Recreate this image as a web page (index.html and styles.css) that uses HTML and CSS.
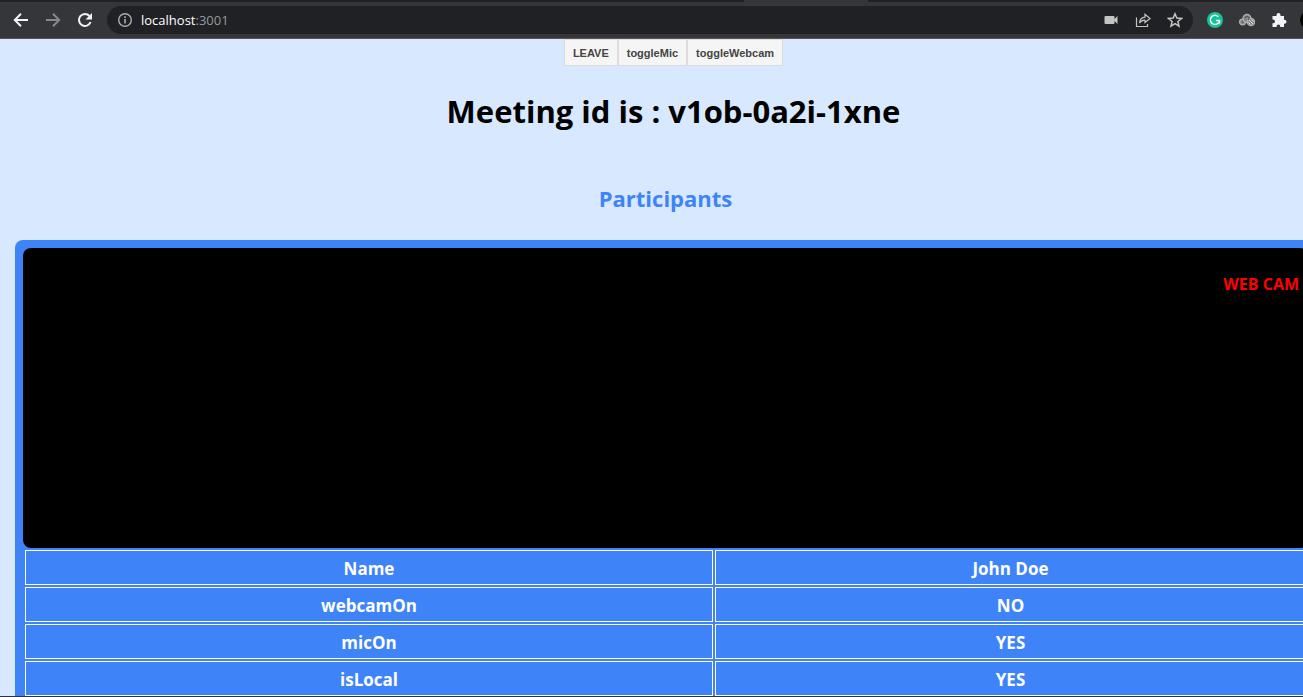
FILE: index.html
```html
<!DOCTYPE html>
<html lang="en">
<head>
<meta charset="utf-8">
<title>Meeting</title>
<link rel="stylesheet" href="styles.css">
</head>
<body>
<header class="browser">
  <div class="tabstrip"><span class="tab"></span></div>
  <div class="toolbar">
    <nav class="nav" aria-label="Navigation">
      <button class="icon" aria-label="Back"><svg viewBox="0 0 16 16"><path d="M15 8H2M8 1.800 1.800 8 8 14.200" fill="none" stroke="#f1f3f4" stroke-width="2"/></svg></button>
      <button class="icon" aria-label="Forward"><svg viewBox="0 0 16 16"><path d="M1 8h13M8 1.800 14.200 8 8 14.200" fill="none" stroke="#86888b" stroke-width="2"/></svg></button>
      <button class="icon" aria-label="Reload"><svg viewBox="0 0 16 16"><path d="M13.600 10A6 6 0 1 1 12.500 4" fill="none" stroke="#f1f3f4" stroke-width="2"/><path d="M15 1v6.500H8.500z" fill="#f1f3f4"/></svg></button>
    </nav>
    <div class="address">
      <svg class="info" viewBox="0 0 16 16"><circle cx="8" cy="8" r="6.300" fill="none" stroke="#aaadb0" stroke-width="1.400"/><path d="M8 7v4.500M8 4.300v1.600" stroke="#aaadb0" stroke-width="1.600"/></svg>
      <span class="url">localhost<span class="port">:3001</span></span>
      <div class="actions">
        <button class="icon" aria-label="Camera"><svg viewBox="0 0 16 16"><path d="M2.500 4h8q1 0 1 1v2L14.500 4v8L11.500 9v2q0 1-1 1h-8q-1 0-1-1V5q0-1 1-1z" fill="#c4c4c4"/></svg></button>
        <button class="icon" aria-label="Share"><svg viewBox="0 0 16 16"><path d="M1.500 5.500v9h11V12M4.500 11Q5 5.500 10 5.200V2.200L15 6.500l-5 4V8.200Q6.500 8 4.500 11z" fill="none" stroke="#c4c4c4" stroke-width="1.200"/></svg></button>
        <button class="icon" aria-label="Bookmark"><svg viewBox="0 0 16 16"><path d="m8 1.800 1.800 4.300 4.700.4-3.600 3 1.100 4.600L8 11.700l-4 2.400 1.100-4.600-3.600-3 4.700-.4z" fill="none" stroke="#c4c4c4" stroke-width="1.500"/></svg></button>
      </div>
    </div>
    <div class="extensions">
      <button class="icon" aria-label="Writing assistant"><svg viewBox="0 0 16 16"><circle cx="8" cy="8" r="8" fill="#15c39a"/><path d="M11.300 4.700A4.600 4.600 0 1 0 12.500 8.500H9M12.500 8.500v3" fill="none" stroke="#fff" stroke-width="1.400"/></svg></button>
      <button class="icon" aria-label="Cloud extension"><svg viewBox="0 0 16 16"><g fill="#858585" stroke="#b0b0b0" stroke-width="1.300"><circle cx="3.500" cy="10" r="2.900"/><circle cx="8" cy="6.500" r="4"/><circle cx="12" cy="10" r="3.600"/></g><path d="M6 6a2 2 0 1 1 3 2M3 9.500l1.500 1" fill="none" stroke="#444" stroke-width="1"/><path d="m10 8 4 4M12.500 7.500l2 2M9.500 10.500l2 2" stroke="#e4e4e4" stroke-width="1"/></svg></button>
      <button class="icon" aria-label="Extensions"><svg viewBox="0 0 16 16"><path d="M2 4h3.500V3a2 2 0 0 1 4 0v1H13v3.800h.500a2 2 0 0 1 0 4H13V15H9.200v-.8a1.800 1.800 0 0 0-3.600 0v.8H1.500v-3.800h.7a1.800 1.800 0 0 0 0-3.600h-.7V4z" fill="#f1f3f4"/></svg></button>
    </div>
    <svg class="avatar" viewBox="0 0 3 20"><circle cx="10" cy="10" r="10"/></svg>
  </div>
</header>
<main class="viewport">
  <div class="page">
    <div class="controls">
      <button class="control">LEAVE</button><button class="control">toggleMic</button><button class="control">toggleWebcam</button>
    </div>
    <h1 class="title">Meeting id is : v1ob-0a2i-1xne</h1>
    <section class="participants">
      <h2 class="subtitle">Participants</h2>
      <article class="card">
        <div class="video"><p class="camera-label">WEB CAM</p></div>
        <table class="details">
          <colgroup><col class="key"><col></colgroup>
          <tbody>
            <tr><th scope="row">Name</th><td>John Doe</td></tr>
            <tr><th scope="row">webcamOn</th><td>NO</td></tr>
            <tr><th scope="row">micOn</th><td>YES</td></tr>
            <tr><th scope="row">isLocal</th><td>YES</td></tr>
          </tbody>
        </table>
      </article>
    </section>
  </div>
</main>
<footer class="edge"></footer>
</body>
</html>
```
FILE: styles.css
```css
* { box-sizing: border-box; }

body {
  margin: 0;
  height: 100vh;
  display: flex;
  flex-direction: column;
  overflow: hidden;
  background: #d7e8ff;
  font-family: "Open Sans", "Noto Sans", sans-serif;
}

.browser {
  flex: none;
  background: #35363a;
  border-bottom: 1px solid #5c5557;
}

.tabstrip {
  display: flex;
  justify-content: center;
  height: 2px;
  padding-left: 308px;
  background: #202124;
}

.tab {
  width: 124px;
  background: #35363a;
}

.toolbar {
  display: flex;
  align-items: center;
  height: 36px;
  padding-left: 13px;
}

.nav {
  display: flex;
  gap: 16px;
  margin-right: 14px;
}

.icon {
  display: block;
  width: 16px;
  height: 16px;
  padding: 0;
  border: 0;
  background: none;
}

.icon svg,
.info {
  display: block;
  width: 16px;
  height: 16px;
}

.address {
  flex: 1;
  display: flex;
  align-items: center;
  gap: 8px;
  height: 28px;
  padding: 0 10px;
  border-radius: 14px;
  background: #202124;
}

.url {
  flex: 1;
  color: #fff;
  font-size: 13px;
  line-height: 20px;
}

.port { color: #969a9f; }

.actions,
.extensions {
  display: flex;
  gap: 16px;
}

.extensions { margin: 0 13px 0 14px; }

.avatar {
  width: 3px;
  height: 20px;
  fill: #000;
}

.viewport {
  flex: 1;
  min-height: 0;
  overflow: hidden;
}

.page {
  width: calc(100% + 44px);
}

.controls {
  display: flex;
  justify-content: center;
}

.control {
  height: 27px;
  padding: 0 8px;
  border: 1px solid #dcdcdc;
  border-radius: 1px;
  background: #f5f5f5;
  color: #444;
  font: bold 11px "Liberation Sans", Arial, sans-serif;
}

.title {
  margin: 24px 0 0;
  text-align: center;
  font-size: 31px;
  line-height: 42px;
  font-weight: 700;
  color: #000;
}

.participants {
  padding: 50px 31px 0 15px;
}

.subtitle {
  margin: 0 0 26px;
  color: #3e84f8;
  text-align: center;
  font-size: 22px;
  line-height: 32px;
  font-weight: 700;
}

.card {
  padding: 8px;
  border-radius: 8px;
  background: #3e84f8;
}

.video {
  height: 300px;
  padding: 24px 9px;
  border-radius: 8px;
  background: #000;
  text-align: right;
}

.camera-label {
  margin: 0;
  color: #f00;
  font-size: 16px;
  line-height: 24px;
  font-weight: 700;
}

.details {
  width: 100%;
  table-layout: fixed;
  border-collapse: separate;
  border-spacing: 2px;
  color: #fff;
  font-size: 17px;
  line-height: 25px;
  text-align: center;
}

.key { width: 688px; }

.details th,
.details td {
  height: 35px;
  padding: 5px 4px 3px;
  border: 1px solid #fff;
  font-weight: 700;
}

.edge {
  flex: none;
  height: 1px;
  background: #303238;
}
```
